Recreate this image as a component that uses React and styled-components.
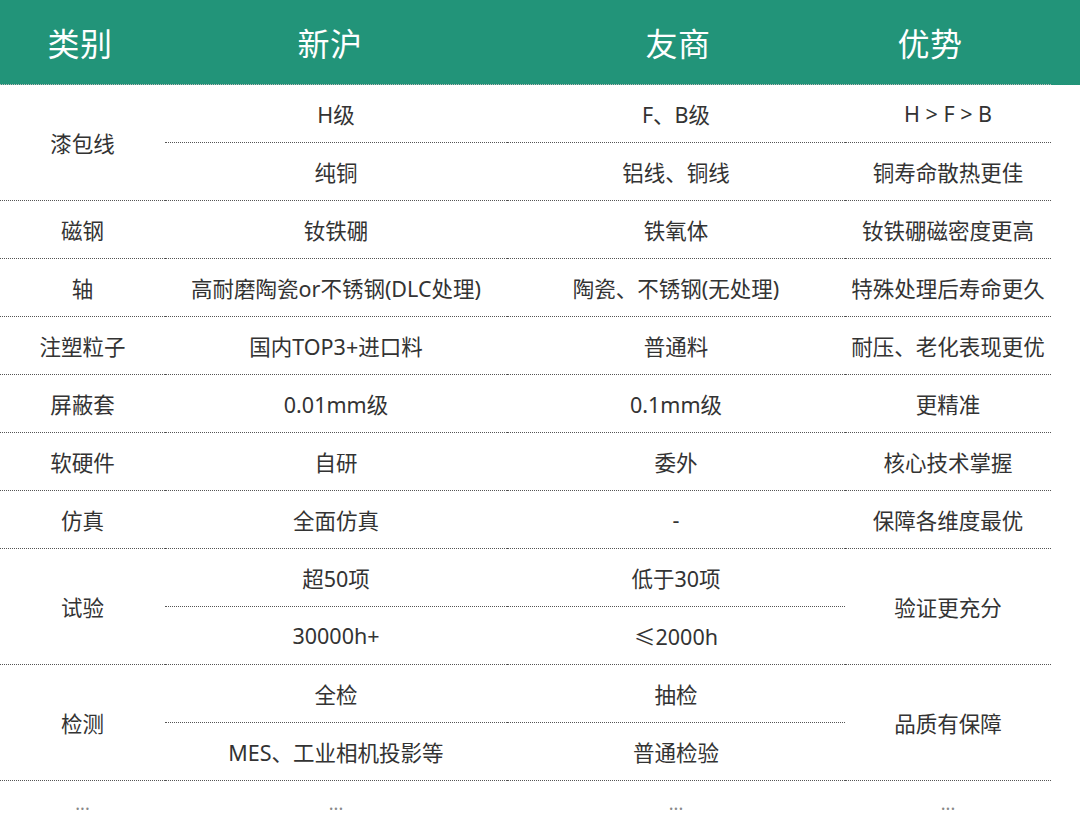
import React from 'react';
import styled, { createGlobalStyle } from 'styled-components';

const GlobalStyle = createGlobalStyle`
  body {
    margin: 0;
    background: #fff;
    font-family: "Noto Sans", "Noto Sans CJK SC", sans-serif;
  }
`;

const Page = styled.div`
  width: 1080px;
  height: 838px;
  overflow: hidden;
  background: #fff;
`;

const Header = styled.div`
  height: 85px;
  background: #229479;
  display: grid;
  grid-template-columns: 160px 340px 356px 148px;
  align-items: center;
`;

const HeadCell = styled.div`
  text-align: center;
  color: #fff;
  font-size: 32px;
  letter-spacing: 0.5px;
  padding-bottom: 2px;
`;

const Body = styled.div`
  width: 1051px;
  display: grid;
  grid-template-columns: 165px 342px 338px 206px;
  grid-auto-rows: 58px;
  border-top: 1px dotted #bbb;
  margin-top: -1px;
`;

const Cell = styled.div`
  grid-row: ${({ $span }) => ($span ? `span ${$span}` : 'auto')};
  display: flex;
  align-items: center;
  justify-content: center;
  box-sizing: border-box;
  border-bottom: 1px dotted #555;
  font-size: 21.5px;
  color: #333;
  white-space: nowrap;
`;

const MoreCell = styled(Cell)`
  border-bottom: none;
  color: #888;
  font-size: 18px;
  padding-bottom: 14px;
`;

const rows = [
  {
    cat: '漆包线',
    sub: [
      ['H级', 'F、B级', 'H > F > B'],
      ['纯铜', '铝线、铜线', '铜寿命散热更佳'],
    ],
  },
  { cat: '磁钢', sub: [['钕铁硼', '铁氧体', '钕铁硼磁密度更高']] },
  { cat: '轴', sub: [['高耐磨陶瓷or不锈钢(DLC处理)', '陶瓷、不锈钢(无处理)', '特殊处理后寿命更久']] },
  { cat: '注塑粒子', sub: [['国内TOP3+进口料', '普通料', '耐压、老化表现更优']] },
  { cat: '屏蔽套', sub: [['0.01mm级', '0.1mm级', '更精准']] },
  { cat: '软硬件', sub: [['自研', '委外', '核心技术掌握']] },
  { cat: '仿真', sub: [['全面仿真', '-', '保障各维度最优']] },
  {
    cat: '试验',
    adv: '验证更充分',
    sub: [
      ['超50项', '低于30项'],
      ['30000h+', '≤2000h'],
    ],
  },
  {
    cat: '检测',
    adv: '品质有保障',
    sub: [
      ['全检', '抽检'],
      ['MES、工业相机投影等', '普通检验'],
    ],
  },
];

const App = () => (
  <Page>
    <GlobalStyle />
    <Header>
      <HeadCell>类别</HeadCell>
      <HeadCell>新沪</HeadCell>
      <HeadCell>友商</HeadCell>
      <HeadCell>优势</HeadCell>
    </Header>
    <Body>
      {rows.map((row) => {
        const span = row.sub.length;
        return (
          <React.Fragment key={row.cat}>
            <Cell $span={span}>{row.cat}</Cell>
            {row.sub.map((cells, i) => (
              <React.Fragment key={i}>
                <Cell>{cells[0]}</Cell>
                <Cell>{cells[1]}</Cell>
                {row.adv ? (i === 0 && <Cell $span={span}>{row.adv}</Cell>) : <Cell>{cells[2]}</Cell>}
              </React.Fragment>
            ))}
          </React.Fragment>
        );
      })}
      {[0, 1, 2, 3].map((i) => (
        <MoreCell key={i}>...</MoreCell>
      ))}
    </Body>
  </Page>
);

export default App;
